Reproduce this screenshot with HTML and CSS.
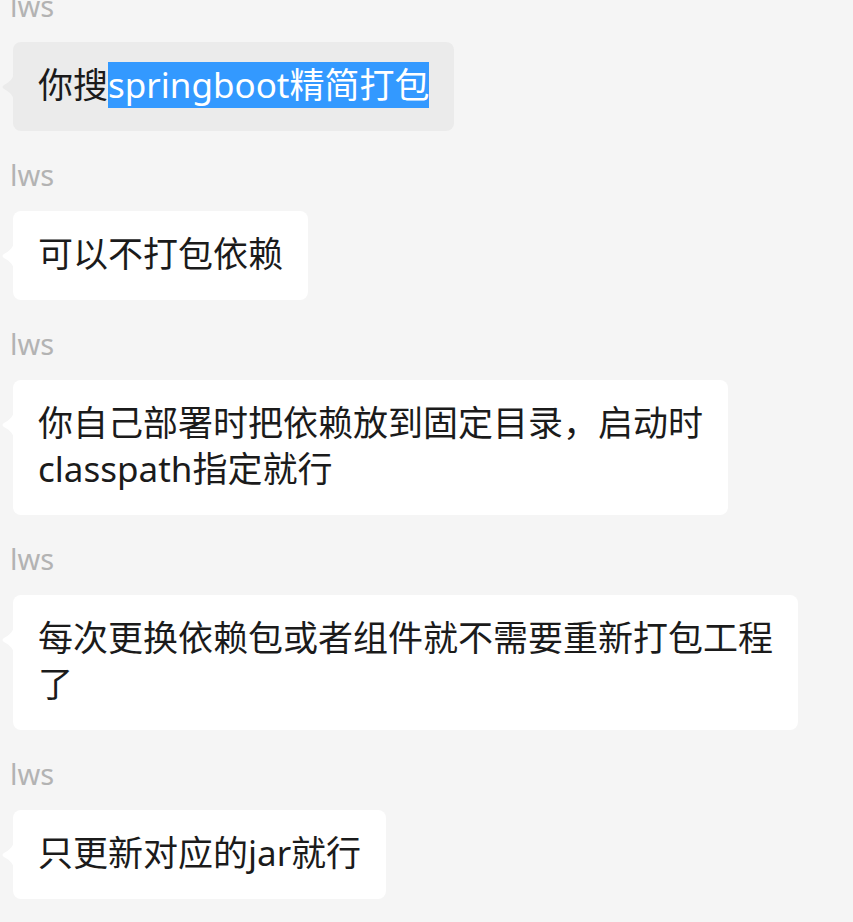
FILE: index.html
```html
<!DOCTYPE html>
<html lang="zh-CN">
<head>
<meta charset="utf-8">
<title>lws</title>
<link rel="stylesheet" href="styles.css">
</head>
<body>
<div class="chat">
  <div class="msg">
    <div class="name">lws</div>
    <div class="bubble hover">你搜<span class="sel">springboot精简打包</span></div>
  </div>
  <div class="msg">
    <div class="name">lws</div>
    <div class="bubble">可以不打包依赖</div>
  </div>
  <div class="msg">
    <div class="name">lws</div>
    <div class="bubble">你自己部署时把依赖放到固定目录，启动时<br>classpath指定就行</div>
  </div>
  <div class="msg">
    <div class="name">lws</div>
    <div class="bubble">每次更换依赖包或者组件就不需要重新打包工程<br>了</div>
  </div>
  <div class="msg">
    <div class="name">lws</div>
    <div class="bubble">只更新对应的jar就行</div>
  </div>
</div>
</body>
</html>
```
FILE: styles.css
```css
html, body {
  margin: 0;
  padding: 0;
  background: #f5f5f5;
}
body {
  font-family: "Noto Sans", "Noto Sans CJK SC", sans-serif;
  color: #1b1b1b;
  overflow: hidden;
}
.chat {
  margin-top: -12px;
  display: flex;
  flex-direction: column;
  gap: 26px;
}
.name {
  font-size: 29px;
  line-height: 36px;
  height: 36px;
  color: #b3b3b3;
  padding-left: 10px;
  margin-bottom: 18px;
}
.bubble {
  position: relative;
  width: fit-content;
  margin-left: 13px;
  background: #ffffff;
  border-radius: 8px;
  font-size: 35px;
  line-height: 46px;
  padding: 20px 25px 23px 25px;
  white-space: nowrap;
}
.bubble.hover {
  background: #ebebeb;
}
.bubble::before {
  content: "";
  position: absolute;
  left: -12px;
  top: 29px;
  width: 13px;
  height: 32px;
  background: inherit;
  clip-path: path("M13 0 C13 7 9 11 3 14 Q0 16 3 18 C9 21 13 25 13 32 Z");
}
.sel {
  display: inline-block;
  vertical-align: top;
  height: 46px;
  background: #3399ff;
  color: #ffffff;
}
```
